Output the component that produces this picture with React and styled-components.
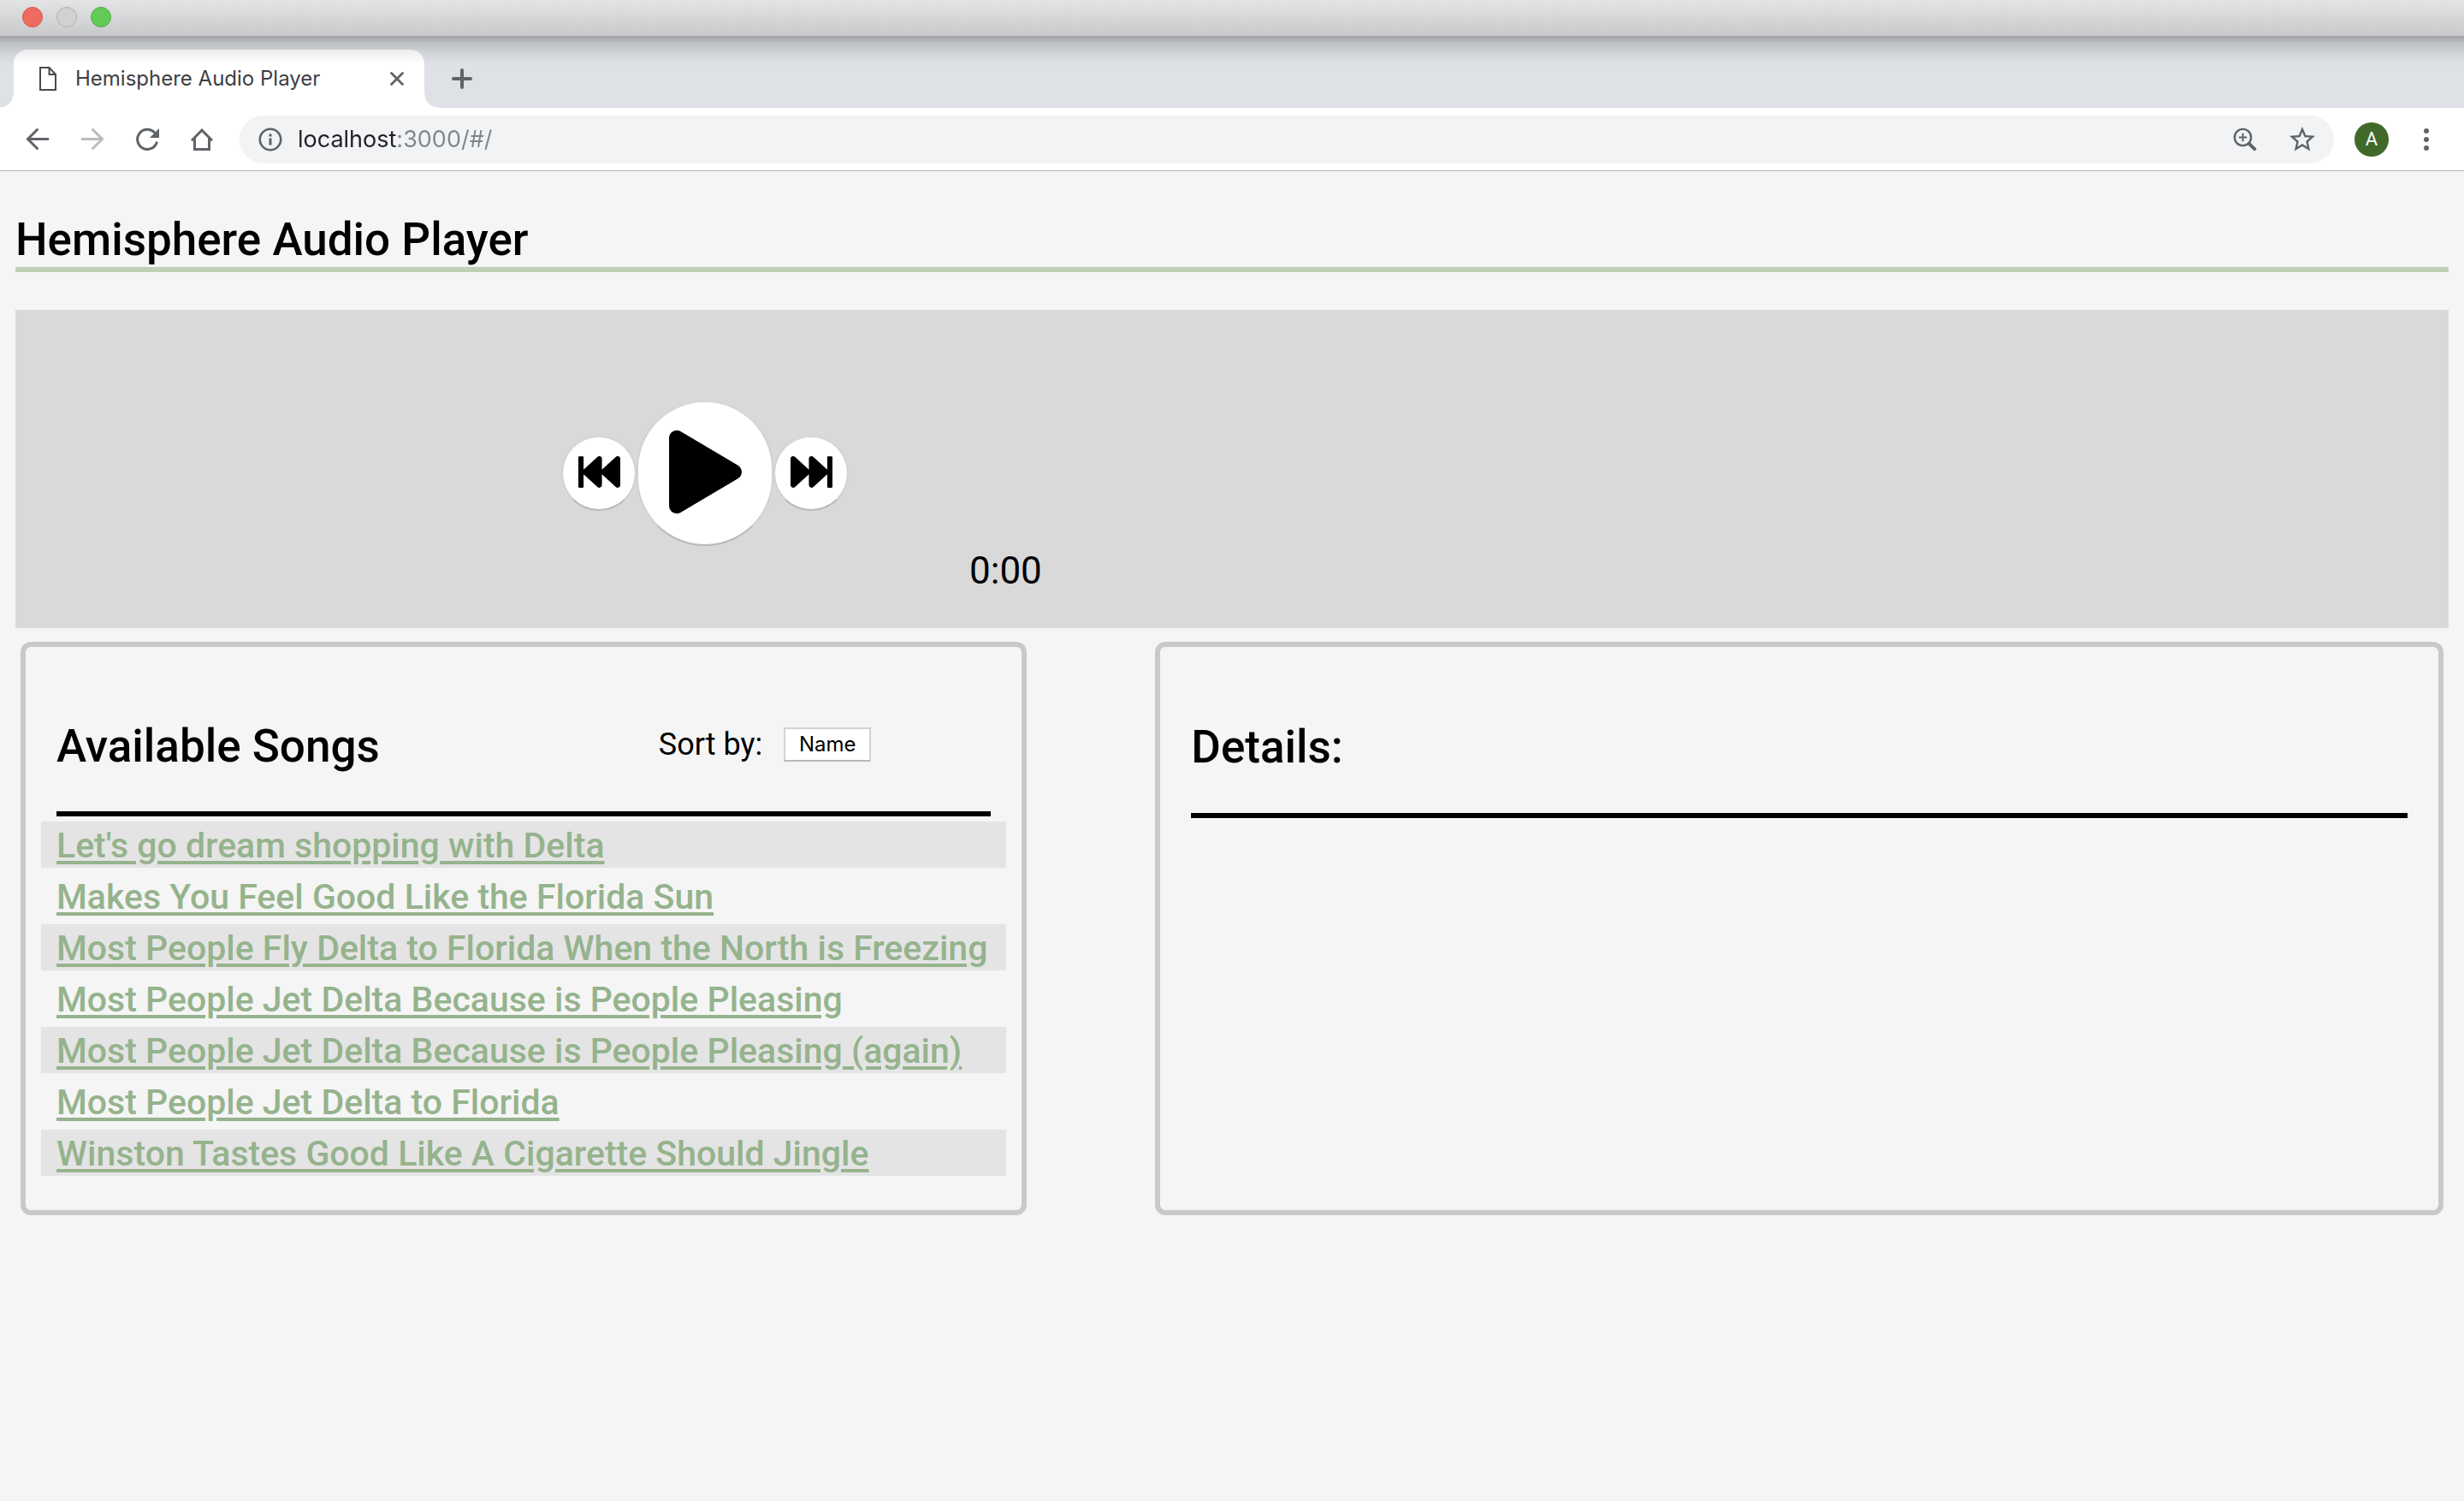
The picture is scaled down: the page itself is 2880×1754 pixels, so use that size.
import React, { useState } from "react";
import styled, { createGlobalStyle } from "styled-components";
import { FaPlay, FaFastBackward, FaFastForward } from "react-icons/fa";

const bodyFont = `Roboto, "Open Sans", sans-serif`;
const systemFont = `Inter, "Liberation Sans", sans-serif`;

const GlobalStyle = createGlobalStyle`
  *, *::before, *::after { box-sizing: border-box; }
  html, body { margin: 0; background: #f5f5f5; }
  body { font-family: ${bodyFont}; color: #000; }
  h1, h2, ul { margin: 0; padding: 0; }
  button { padding: 0; cursor: pointer; color: inherit; }
  svg { display: block; flex: none; }
`;

/* ---------- browser window ---------- */

const TitleBar = styled.header`
  display: flex;
  align-items: center;
  gap: 16px;
  height: 42px;
  padding: 0 26px 2px;
  background: linear-gradient(#e3e4e6, #c8c9cb);
`;

const WindowButton = styled.button`
  width: 24px;
  height: 24px;
  border: 1px solid ${(p) => p.$edge};
  border-radius: 50%;
  background: ${(p) => p.$fill};
`;

const TabStrip = styled.div`
  display: flex;
  align-items: flex-end;
  gap: 32px;
  height: 84px;
  padding-left: 16px;
  background: linear-gradient(#a2a3a7 0, #bcbec2 8px, #d0d3d8 20px, #dee1e6 34px);
`;

const Tab = styled.div`
  position: relative;
  display: flex;
  align-items: center;
  width: 480px;
  height: 68px;
  padding: 0 24px 0 30px;
  border-radius: 16px 16px 0 0;
  background: linear-gradient(#ececed, #fff 16px);
  font: 400 24px/32px ${systemFont};
  color: #3c4043;

  &::before,
  &::after {
    content: "";
    position: absolute;
    bottom: 0;
    width: 16px;
    height: 16px;
  }
  &::before {
    right: 100%;
    background: radial-gradient(circle at 0 0, transparent 15px, #fff 16px);
  }
  &::after {
    left: 100%;
    background: radial-gradient(circle at 100% 0, transparent 15px, #fff 16px);
  }
`;

const TabTitle = styled.span`
  flex: 1;
  padding-left: 22px;
  white-space: nowrap;
`;

const IconButton = styled.button`
  display: flex;
  align-items: center;
  justify-content: center;
  width: ${(p) => p.$width}px;
  height: ${(p) => p.$height || 40}px;
  border: 0;
  background: none;
  color: ${(p) => (p.disabled ? "#babcbe" : "#5f6368")};
`;

const NewTab = styled(IconButton)`
  height: 68px;
`;

const Toolbar = styled.nav`
  display: flex;
  align-items: center;
  height: 74px;
  padding: 0 24px 0 12px;
  border-bottom: 1px solid #b4b6b7;
  background: #fff;
`;

const AddressBar = styled.div`
  flex: 1;
  display: flex;
  align-items: center;
  height: 56px;
  margin: 0 24px 0 12px;
  padding: 0 22px;
  border-radius: 28px;
  background: #f1f3f4;
  color: #5f6368;
`;

const Address = styled.input`
  flex: 1;
  min-width: 0;
  height: 40px;
  margin: 0 18px;
  padding: 0;
  border: 0;
  outline: 0;
  font: 400 27px/40px ${systemFont};
  color: transparent;
  background: linear-gradient(90deg, #202124 117px, #80868b 117px);
  background-clip: text;
  -webkit-background-clip: text;
`;

const AddressActions = styled.div`
  display: flex;
  gap: 38px;
`;

const Avatar = styled.button`
  width: 40px;
  height: 40px;
  margin-right: 24px;
  border: 0;
  border-radius: 50%;
  background: #41692a;
  font: 400 22px/40px ${bodyFont};
  && { color: #fff; }
`;

/* ---------- page ---------- */

const Page = styled.main`
  padding: 44px 18px 0;
`;

const Heading = styled.h2`
  font-size: 53px;
  line-height: 64px;
  font-weight: 500;
  white-space: nowrap;
  && { padding-top: 4px; }
`;

const PageTitle = styled(Heading)`
  border-bottom: 6px solid #bed1b8;
`;

const Player = styled.section`
  display: grid;
  grid-template-columns: 17fr 13fr;
  margin-top: 44px;
  padding: 106px 0 38px;
  background: #d9d9d9;
`;

const Controls = styled.div`
  display: flex;
  align-items: center;
  justify-content: center;
`;

const ControlButton = styled.button`
  display: flex;
  align-items: center;
  justify-content: center;
  width: ${(p) => (p.$large ? 160 : 88)}px;
  height: ${(p) => (p.$large ? 170 : 88)}px;
  padding: 0 0 4px 2px;
  border: 2px solid;
  border-color: #d7d7d7 #d2d2d2 #b9b9b9;
  border-radius: 80px;
  background: #fff;
`;

const Elapsed = styled.time`
  grid-row: 2;
  grid-column: 1 / -1;
  padding-left: 1115px;
  font-size: 44px;
  line-height: 58px;
`;

const Panels = styled.div`
  display: grid;
  grid-template-columns: 25fr 32fr;
  gap: 150px;
  margin-top: 16px;
  padding: 0 6px;
`;

const Panel = styled.section`
  padding: 80px 18px 40px;
  border: 6px solid #c9c9c9;
  border-radius: 12px;
`;

const PanelHeader = styled.div`
  display: flex;
  align-items: center;
  justify-content: space-between;
  height: ${(p) => p.$height}px;
  margin: 0 18px;
  padding: 0 140px 44px 0;
  border-bottom: 6px solid #000;
`;

const Sort = styled.div`
  display: flex;
  align-items: center;
  gap: 25px;
  font-size: 36px;
  line-height: 48px;
`;

const SortButton = styled.button`
  width: 102px;
  height: 40px;
  border: 2px solid;
  border-color: #d2d2d2 #d2d2d2 #b9b9b9;
  background: #fff;
  font: 400 24px/32px ${systemFont};
`;

const SongList = styled.ul`
  display: grid;
  gap: 6px;
  && { margin-top: 6px; }
  list-style: none;
`;

const Song = styled.li`
  height: 54px;
  padding: 0 18px;
  font-size: 41px;
  line-height: 56px;
  font-weight: 500;
  white-space: nowrap;

  &:nth-child(odd) {
    background: #e4e4e4;
  }
`;

const SongLink = styled.a`
  color: #95b38d;
  text-decoration-line: underline;
  text-decoration-thickness: 4px;
  text-underline-offset: 4px;
`;

const Icon = ({ size = 28, children, ...rest }) => (
  <svg width={size} height={size} viewBox={`0 0 ${size} ${size}`} fill="none"
    stroke="currentColor" strokeWidth="3" aria-hidden="true" {...rest}>
    {children}
  </svg>
);

const BackIcon = () => (
  <Icon strokeLinecap="round"><path d="M26 13.5H3M13.5 2.5 2.5 13.5l11 11" /></Icon>
);
const ForwardIcon = () => (
  <Icon strokeLinecap="round"><path d="M2 13.5H25M14.5 2.5l11 11-11 11" /></Icon>
);
const ReloadIcon = () => (
  <Icon>
    <path d="M22.2 5.4A11.6 11.6 0 1 0 25.1 17.9" strokeLinecap="round" />
    <path d="M28 1v11H17z" fill="currentColor" stroke="none" />
  </Icon>
);
const HomeIcon = () => (
  <Icon><path d="M2 15.2 14 3.2l12 12M5.5 12.5v13h17v-13" /></Icon>
);
const InfoIcon = () => (
  <Icon>
    <circle cx="14" cy="14" r="12.2" strokeWidth="2.6" />
    <path d="M14 12.5v8M14 7.5v3" />
  </Icon>
);
const ZoomIcon = () => (
  <Icon>
    <circle cx="11.5" cy="11.5" r="9.6" strokeWidth="2.4" />
    <path d="M11.5 6.8v9.4M6.8 11.5h9.4" strokeWidth="2" />
    <path d="m18.8 18.8 6.4 6.4" strokeWidth="4" strokeLinecap="round" />
  </Icon>
);
const StarIcon = () => (
  <svg width="30" height="30" viewBox="2 2 20 20" fill="currentColor" aria-hidden="true">
    <path d="M22 9.24l-7.19-.62L12 2 9.19 8.63 2 9.24l5.46 4.73L5.82 21 12 17.27 18.18 21l-1.63-7.03L22 9.24zM12 15.4l-3.76 2.27 1-4.28-3.32-2.88 4.38-.38L12 6.1l1.71 4.04 4.38.38-3.32 2.88 1 4.28L12 15.4z" />
  </svg>
);
const MenuIcon = () => (
  <Icon stroke="none" fill="currentColor">
    <circle cx="14" cy="4" r="3" /><circle cx="14" cy="14" r="3" /><circle cx="14" cy="24" r="3" />
  </Icon>
);
const PageIcon = () => (
  <svg width="20" height="28" viewBox="0 0 20 28" fill="none" stroke="#4a4a4a" strokeWidth="2" aria-hidden="true">
    <path d="M1 1h10.5L19 9v18H1zM11.5 1v8H19" />
  </svg>
);
const CloseIcon = () => (
  <Icon size={16} strokeLinecap="round"><path d="M1.5 1.5l13 13M14.5 1.5l-13 13" strokeWidth="2.8" /></Icon>
);
const PlusIcon = () => (
  <Icon size={24} strokeLinecap="round"><path d="M12 2v20M2 12h20" strokeWidth="4" /></Icon>
);

const songs = [
  "Let's go dream shopping with Delta",
  "Makes You Feel Good Like the Florida Sun",
  "Most People Fly Delta to Florida When the North is Freezing",
  "Most People Jet Delta Because is People Pleasing",
  "Most People Jet Delta Because is People Pleasing (again)",
  "Most People Jet Delta to Florida",
  "Winston Tastes Good Like A Cigarette Should Jingle",
];

function BrowserChrome() {
  const [url, setUrl] = useState("localhost:3000/#/");
  return (
    <>
      <TitleBar>
        <WindowButton aria-label="Close window" $fill="#ee6b60" $edge="#d9554b" />
        <WindowButton aria-label="Minimize window" $fill="#d1d1d1" $edge="#b0b0b2" />
        <WindowButton aria-label="Zoom window" $fill="#62ca56" $edge="#4faf43" />
      </TitleBar>
      <TabStrip>
        <Tab>
          <PageIcon />
          <TabTitle>Hemisphere Audio Player</TabTitle>
          <IconButton $width={16} aria-label="Close tab"><CloseIcon /></IconButton>
        </Tab>
        <NewTab $width={24} aria-label="New tab"><PlusIcon /></NewTab>
      </TabStrip>
      <Toolbar>
        <IconButton $width={64} aria-label="Back"><BackIcon /></IconButton>
        <IconButton $width={64} aria-label="Forward" disabled><ForwardIcon /></IconButton>
        <IconButton $width={64} aria-label="Reload"><ReloadIcon /></IconButton>
        <IconButton $width={64} aria-label="Home"><HomeIcon /></IconButton>
        <AddressBar>
          <InfoIcon />
          <Address aria-label="Address" value={url} spellCheck={false}
            onChange={(e) => setUrl(e.target.value)} />
          <AddressActions>
            <IconButton $width={28} aria-label="Page zoom"><ZoomIcon /></IconButton>
            <IconButton $width={30} aria-label="Bookmark"><StarIcon /></IconButton>
          </AddressActions>
        </AddressBar>
        <Avatar aria-label="Profile A">A</Avatar>
        <IconButton $width={40} aria-label="Menu"><MenuIcon /></IconButton>
      </Toolbar>
    </>
  );
}

export default function App() {
  return (
    <>
      <GlobalStyle />
      <BrowserChrome />
      <Page>
        <PageTitle as="h1">Hemisphere Audio Player</PageTitle>
        <Player>
          <Controls>
            <ControlButton aria-label="Previous song"><FaFastBackward size={49} /></ControlButton>
            <ControlButton aria-label="Play" $large><FaPlay size={97} /></ControlButton>
            <ControlButton aria-label="Next song"><FaFastForward size={49} /></ControlButton>
          </Controls>
          <Elapsed>0:00</Elapsed>
        </Player>
        <Panels>
          <Panel>
            <PanelHeader $height={118}>
              <Heading>Available Songs</Heading>
              <Sort>
                <span id="sort-label">Sort by:</span>
                <SortButton aria-describedby="sort-label">Name</SortButton>
              </Sort>
            </PanelHeader>
            <SongList>
              {songs.map((title) => (
                <Song key={title}><SongLink href="#/">{title}</SongLink></Song>
              ))}
            </SongList>
          </Panel>
          <Panel>
            <PanelHeader $height={120}>
              <Heading>Details:</Heading>
            </PanelHeader>
          </Panel>
        </Panels>
      </Page>
    </>
  );
}
